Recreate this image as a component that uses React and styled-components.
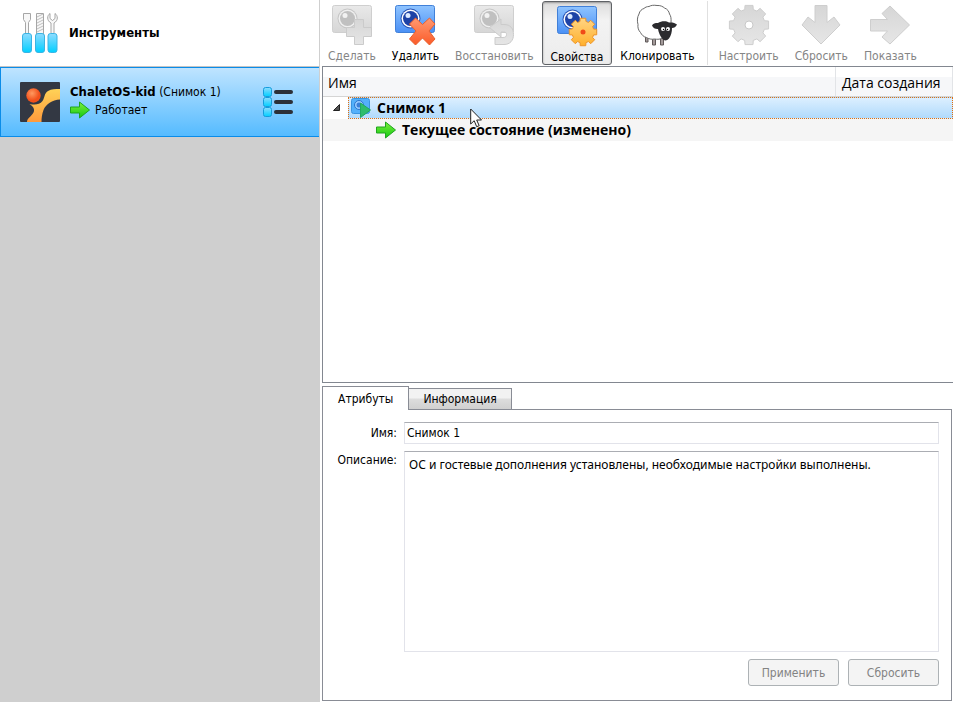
import React from "react"
import styled, { createGlobalStyle } from "styled-components"

const Defs = () => (
  <HiddenSvg width="0" height="0" aria-hidden="true">
    <defs>
      <linearGradient id="camBlue" x1="0" y1="0" x2="0" y2="1">
        <stop offset="0" stopColor="#8fc4ff" />
        <stop offset="1" stopColor="#4a90f5" />
      </linearGradient>
      <linearGradient id="camGray" x1="0" y1="0" x2="0" y2="1">
        <stop offset="0" stopColor="#e9e9e9" />
        <stop offset="1" stopColor="#d6d6d6" />
      </linearGradient>
      <linearGradient id="gray" x1="0" y1="0" x2="0" y2="1">
        <stop offset="0" stopColor="#d6d6d6" />
        <stop offset="1" stopColor="#e6e6e6" />
      </linearGradient>
      <linearGradient id="red" x1="0" y1="0" x2="0" y2="1">
        <stop offset="0" stopColor="#ff9a72" />
        <stop offset="1" stopColor="#fb5a28" />
      </linearGradient>
      <linearGradient id="gold" x1="0" y1="0" x2="0" y2="1">
        <stop offset="0" stopColor="#ffd584" />
        <stop offset="1" stopColor="#ffb02c" />
      </linearGradient>
      <linearGradient id="green" x1="0" y1="0" x2="0" y2="1">
        <stop offset="0" stopColor="#7ef03c" />
        <stop offset="1" stopColor="#12c812" />
      </linearGradient>
      <linearGradient id="cyan" x1="0" y1="0" x2="0" y2="1">
        <stop offset="0" stopColor="#8fdcff" />
        <stop offset="1" stopColor="#00cfff" />
      </linearGradient>
      <linearGradient id="amber" x1="0" y1="0" x2="0" y2="1">
        <stop offset="0" stopColor="#ffd257" />
        <stop offset="1" stopColor="#ff9a3c" />
      </linearGradient>
      <radialGradient id="ball" cx="0.4" cy="0.35">
        <stop offset="0" stopColor="#ff9a60" />
        <stop offset="1" stopColor="#f2501a" />
      </radialGradient>
    </defs>
  </HiddenSvg>
)

const gearPath = (c, outer, inner) => {
  const points = []
  for (let i = 0; i < 8; i++) {
    const a = (i * Math.PI) / 4
    ;[
      [inner, -0.27],
      [outer, -0.2],
      [outer, 0.2],
      [inner, 0.27],
    ].forEach(([r, d]) =>
      points.push(
        `${(c + r * Math.cos(a + d)).toFixed(2)} ${(c + r * Math.sin(a + d)).toFixed(2)}`
      )
    )
  }
  return `M${points.join("L")}Z`
}

const Camera = ({ gray }) => (
  <g>
    <rect
      x="0.5"
      y="0.5"
      width="39"
      height="27"
      rx="2"
      fill={gray ? "url(#camGray)" : "url(#camBlue)"}
      stroke={gray ? "#cfcfcf" : "#4180d8"}
    />
    <circle cx="15.5" cy="13.5" r="10" fill={gray ? "#c6c6c6" : "#2a55b5"} />
    <circle cx="15.5" cy="13.5" r="9" fill={gray ? "#efefef" : "#fff"} />
    <circle cx="15.5" cy="13.5" r="7.5" fill={gray ? "#c0c0c0" : "#1d42a6"} />
    <circle cx="13" cy="10.5" r="2.5" fill={gray ? "#f2f2f2" : "#dceaff"} />
  </g>
)

const TakeIcon = () => (
  <svg viewBox="0 0 40 40">
    <Camera gray />
    <path
      d="M22.5 14.5h9v8h8v9h-8v8h-9v-8h-8v-9h8z"
      fill="url(#gray)"
      stroke="#cbcbcb"
    />
  </svg>
)
const DeleteIcon = () => (
  <svg viewBox="0 0 40 40">
    <Camera />
    <path
      d="M20.5 13l7 6.5 7-6.500 5.500 6-6 7 6 8-5.500 6-7-7-7 7-6-6 6.500-8-6.500-7z"
      fill="url(#red)"
      stroke="#e8602e"
      strokeLinejoin="round"
    />
  </svg>
)
const RestoreIcon = () => (
  <svg viewBox="0 0 40 40">
    <Camera gray />
    <path
      d="M15.5 22.5L27 14v5.500h3c6.500 0 9.500 4 9.500 10s-3.500 10-9.500 10h-9v-7h8c2.500 0 3.500-1 3.500-3s-1-2.500-3.500-2.500h-2V32z"
      fill="url(#gray)"
      stroke="#cbcbcb"
      strokeLinejoin="round"
    />
  </svg>
)
const PropertiesIcon = () => (
  <svg viewBox="0 0 40 40">
    <Camera />
    <path
      d={gearPath(26, 14, 11)}
      fill="url(#gold)"
      stroke="#ee9428"
      strokeLinejoin="round"
    />
    <circle cx="26" cy="26" r="2.5" fill="#f04a18" />
  </svg>
)
const SheepIcon = () => (
  <svg viewBox="0 0 40 40">
    <g fill="#a39a9a" stroke="#5e5858">
      <path d="M8.500 31v6h2.500v-5M15.500 33v7h3v-7M23.500 33v7h3v-7" />
    </g>
    <path
      d="M12 1.500c2-1.300 5-1.500 8-1 3-.3 6 1 7.500 2.500 3 1 4.500 3.500 5 6 1.500 2 1.800 5 1.500 8 1 4-.5 8-2 10-.5 3-3 5-5.500 5.500-3 2-6 2-9 1.500-3 .7-6-.2-8-1.500-3-.5-5-3-6-5-2-2-3-5-2.500-8C0 16 .2 12 2 9c.5-3 3-5 5-5.500 1-1.200 3-2 5-2z"
      fill="#fff"
      stroke="#6a6a6a"
    />
    <path
      d="M15 20.500c1-2 3-2.500 6-2.500 3-2 8-2.500 11-.5 3-.3 6 .2 8 2-1 2.500-3 3.500-5 3.500 0 4-1 8-3 10.500-2 2.500-5 2.500-6.500.5-2-2.500-4-6.500-4.500-10-2.500.2-5-1-6-3.500z"
      fill="#2b2b2e"
    />
    <circle cx="26" cy="24" r="2" fill="#fff" />
    <circle cx="31" cy="24" r="2" fill="#fff" />
    <circle cx="26.500" cy="24.500" r="0.700" />
    <circle cx="30.500" cy="24.500" r="0.700" />
  </svg>
)
const SettingsIcon = () => (
  <svg viewBox="0 0 40 40">
    <path
      d={gearPath(20, 20, 16)}
      fill="url(#gray)"
      stroke="#cecece"
      strokeLinejoin="round"
    />
    <circle cx="20" cy="20" r="4" fill="#fff" stroke="#c8c8c8" />
  </svg>
)
const DiscardIcon = () => (
  <svg viewBox="0 0 40 40">
    <path
      d="M14 .5h12v17l7-5.500 6 8-19 19L1 20l6-8 7 5.500z"
      fill="url(#gray)"
      stroke="#cecece"
      strokeLinejoin="round"
    />
  </svg>
)
const ShowIcon = () => (
  <svg viewBox="0 0 40 40">
    <path
      d="M.5 14.500h17l-5.500-6 8-7.500L39.500 20 20 39l-8-7 5.500-6H.5z"
      fill="url(#gray)"
      stroke="#cecece"
      strokeLinejoin="round"
    />
  </svg>
)
const ToolsIcon = () => (
  <svg width="36" height="40" viewBox="0 0 36 40">
    <g fill="#f7f7f7" stroke="#a6a6a6">
      <path d="M1.500.5h7v6l-2 3v12h-3v-12l-2-3z" />
      <path d="M14.500.5h7v21h-7z" />
      <path
        d="M15 4l6-3M15 7l6-3M15 10l6-3M15 13l6-3M15 16l6-3M15 19l6-3"
        strokeWidth="0.700"
      />
      <path d="M28 .5v5l2.500 2L33 5.500v-5c3 2 3.500 7-1 9.500v11.500h-3V10c-4.500-2.500-4-7.500-1-9.500z" />
    </g>
    <g fill="url(#cyan)" stroke="#3ab4e4">
      <rect x="0.500" y="20.500" width="9" height="19" rx="2.500" />
      <rect x="13.500" y="20.500" width="9" height="19" rx="2.500" />
      <rect x="26" y="20.500" width="9" height="19" rx="2.500" />
    </g>
  </svg>
)
const MachineIcon = () => (
  <svg width="40" height="40" viewBox="0 0 40 40">
    <rect width="40" height="40" rx="1" fill="#333843" />
    <circle cx="13.500" cy="13.500" r="7.200" fill="url(#ball)" />
    <path
      d="M40 7v10.500C32 18 26 22 23.500 28c-1.500 4-2 8-2 12H7c0-4 4-5 6.500-9.500 1.500-3 0-6-4-8.500 5 1 10 1 13-3 2.500-3.500 1.500-7.500 5.500-10 3.500-2 7.500-2 12-2z"
      fill="url(#amber)"
    />
  </svg>
)
const GreenArrow = () => (
  <svg width="20" height="18" viewBox="0 0 20 18">
    <path
      d="M.5 6h9V1l10 8-10 8v-5h-9z"
      fill="url(#green)"
      stroke="#1fa41f"
      strokeLinejoin="round"
    />
  </svg>
)
const MenuIcon = () => (
  <svg width="31" height="30" viewBox="0 0 31 30">
    {[0, 10, 20].map((y) => (
      <g key={y}>
        <rect
          x="0.500"
          y={y + 0.5}
          width="8"
          height="9"
          rx="2"
          fill="url(#cyan)"
          stroke="#159ddc"
        />
        <rect x="11" y={y + 3} width="19" height="4" rx="2" fill="#2c3038" />
      </g>
    ))}
  </svg>
)
const SnapshotIcon = () => (
  <svg width="20" height="20" viewBox="0 0 20 20">
    <rect x="0.500" y="0.500" width="18" height="15" rx="2" fill="#54b0fa" stroke="#3a94e0" />
    <circle cx="8" cy="7" r="4.500" fill="#9accff" stroke="#2a74cc" />
    <circle cx="8" cy="7" r="2.500" fill="#3a7fd8" />
    <path d="M9.500 5l10 7-10 7.500z" fill="#2ebc6c" stroke="#22a862" />
  </svg>
)
const CursorIcon = () => (
  <svg width="13" height="20" viewBox="0 0 13 20">
    <path
      d="M.7 1v15l3.500-3.300 2.500 6 2.500-1-2.500-5.700h4.800z"
      fill="#fff"
      stroke="#222"
    />
  </svg>
)

const groups = [
  [
    { label: "Сделать", icon: <TakeIcon />, disabled: true },
    { label: "Удалить", icon: <DeleteIcon /> },
    { label: "Восстановить", icon: <RestoreIcon />, disabled: true },
    { label: "Свойства", icon: <PropertiesIcon />, active: true },
    { label: "Клонировать", icon: <SheepIcon /> },
  ],
  [
    { label: "Настроить", icon: <SettingsIcon />, disabled: true },
    { label: "Сбросить", icon: <DiscardIcon />, disabled: true },
    { label: "Показать", icon: <ShowIcon />, disabled: true },
  ],
]

const App = () => (
  <>
    <GlobalStyle />
    <Defs />
    <Page>
      <Sidebar>
        <ToolsItem>
          <ToolsIcon />
          <Name>Инструменты</Name>
        </ToolsItem>
        <Machine>
          <MachineIcon />
          <MachineText>
            <div>
              <Name>ChaletOS-kid</Name> (Снимок 1)
            </div>
            <State>
              <GreenArrow />
              Работает
            </State>
          </MachineText>
          <MenuButton type="button" aria-label="Меню">
            <MenuIcon />
          </MenuButton>
        </Machine>
      </Sidebar>

      <Main>
        <Toolbar>
          {groups.map((group, i) => (
            <ToolGroup key={i}>
              {group.map(({ label, icon, disabled, active }) => (
                <Tool key={label} type="button" disabled={disabled} $active={active}>
                  {icon}
                  {label}
                </Tool>
              ))}
            </ToolGroup>
          ))}
        </Toolbar>

        <TreePane>
          <Tree>
            <thead>
              <tr>
                <Th>Имя</Th>
                <Th $date>Дата создания</Th>
              </tr>
            </thead>
            <tbody>
              <tr>
                <Td colSpan={2}>
                  <TreeRow>
                    <Expander type="button" aria-label="Свернуть">
                      <svg width="9" height="9" viewBox="0 0 9 9">
                        <path d="M7.500 1.500v6h-6z" fill="#555" stroke="#222" />
                      </svg>
                    </Expander>
                    <Selected>
                      <SnapshotIcon />
                      Снимок 1
                      <Cursor>
                        <CursorIcon />
                      </Cursor>
                    </Selected>
                  </TreeRow>
                </Td>
              </tr>
              <tr>
                <Td colSpan={2}>
                  <TreeRow $child>
                    <GreenArrow />
                    Текущее состояние (изменено)
                  </TreeRow>
                </Td>
              </tr>
            </tbody>
          </Tree>
        </TreePane>

        <Details>
          <Tabs role="tablist">
            <Tab type="button" role="tab" aria-selected="true" $active>
              Атрибуты
            </Tab>
            <Tab type="button" role="tab" aria-selected="false">
              Информация
            </Tab>
          </Tabs>
          <Panel role="tabpanel">
            <Label htmlFor="name">Имя:</Label>
            <Input id="name" defaultValue="Снимок 1" />
            <Label htmlFor="description" $multiline>
              Описание:
            </Label>
            <TextArea
              id="description"
              defaultValue="ОС и гостевые дополнения установлены, необходимые настройки выполнены."
            />
            <Actions>
              <Button type="button" disabled>
                Применить
              </Button>
              <Button type="button" disabled>
                Сбросить
              </Button>
            </Actions>
          </Panel>
        </Details>
      </Main>
    </Page>
  </>
)

export default App

const GlobalStyle = createGlobalStyle`
  * {
    box-sizing: border-box;
  }
  body {
    margin: 0;
    background: white;
    color: black;
    font: 12px/18px Tahoma, "DejaVu Sans Condensed", "DejaVu Sans", sans-serif;
  }
  button, input, textarea {
    font: inherit;
    color: inherit;
  }
  svg {
    display: block;
    flex-shrink: 0;
  }
`
const HiddenSvg = styled.svg`
  position: absolute;
`
const Page = styled.div`
  display: flex;
  min-height: 100vh;
`
const Sidebar = styled.aside`
  flex: 0 0 320px;
  background: #cfcfcf;
`
const Name = styled.strong`
  font-size: 13px;
`
const ToolsItem = styled.div`
  display: flex;
  align-items: center;
  gap: 11px;
  height: 67px;
  padding-left: 22px;
  background: white;
  border-bottom: 1px solid #c4c4c4;
  border-right: 1px solid #cfcfcf;
`
const Machine = styled.div`
  display: flex;
  align-items: center;
  gap: 10px;
  height: 70px;
  margin-right: 1px;
  padding: 0 25px 0 19px;
  border: 1px solid #0a8ce8;
  border-right: 0;
  background: linear-gradient(#bfe4ff, #55bbff);
`
const MachineText = styled.div`
  flex: 1;
  padding-bottom: 2px;
  white-space: nowrap;
`
const State = styled.div`
  display: flex;
  align-items: center;
  gap: 5px;
`
const MenuButton = styled.button`
  padding: 0;
  border: 0;
  background: none;
`
const Main = styled.main`
  flex: 1;
  min-width: 0;
  display: flex;
  flex-direction: column;
  padding-bottom: 1px;
`
const Toolbar = styled.div`
  display: flex;
  height: 66px;
  padding: 1px 0;
`
const ToolGroup = styled.div`
  display: flex;

  & + & {
    margin-left: 4px;
    padding-left: 3px;
    border-left: 1px solid #e0e0e0;
  }
`
const Tool = styled.button`
  display: flex;
  flex-direction: column;
  align-items: center;
  padding: ${(props) => (props.$active ? "4px 8px 0" : "3px 7px 0")};
  border: 1px solid ${(props) => (props.$active ? "#5f6266" : "transparent")};
  border-radius: 3px;
  background: ${(props) =>
    props.$active ? "linear-gradient(#dcdcdc, #f3f3f3 30%, #ececec)" : "none"};
  box-shadow: ${(props) => (props.$active ? "inset 0 1px 2px #999" : "none")};
  white-space: nowrap;

  &:disabled {
    color: #858585;
  }
  svg {
    width: 40px;
    height: 40px;
    margin-bottom: 2px;
    overflow: visible;
  }
`
const TreePane = styled.section`
  flex: 1 1 0;
  margin-left: 2px;
  border: 1px solid #828790;
  border-right: 0;
  font: 14px/20px "Open Sans", "Noto Sans", sans-serif;
`
const Tree = styled.table`
  width: 100%;
  border-collapse: collapse;
`
const Th = styled.th`
  width: ${(props) => (props.$date ? "117px" : "auto")};
  height: 29px;
  padding: ${(props) => (props.$date ? "4px 6px 0" : "4px 5px 0")};
  border-right: 1px solid #e2e4e7;
  border-bottom: 1px solid #d5d5d5;
  background: linear-gradient(white 35%, #f6f7f9 35%);
  font-weight: 400;
  text-align: left;
  white-space: nowrap;
`
const Td = styled.td`
  padding: 0;
`
const TreeRow = styled.div`
  display: flex;
  align-items: center;
  gap: ${(props) => (props.$child ? "6px" : "0")};
  height: 22px;
  padding-left: ${(props) => (props.$child ? "53px" : "0")};
  background: ${(props) => (props.$child ? "#f5f5f5" : "white")};
  font-weight: 700;
`
const Expander = styled.button`
  width: 25px;
  padding: 0 0 0 9px;
  border: 0;
  background: none;
`
const Selected = styled.div`
  position: relative;
  flex: 1;
  display: flex;
  align-items: center;
  gap: 6px;
  height: 22px;
  padding-left: 2px;
  border: 1px dotted #e07010;
  background: linear-gradient(#dcefff, #b0dafc);
`
const Cursor = styled.span`
  position: absolute;
  left: 121px;
  top: 10px;
  z-index: 1;
`
const Details = styled.section`
  flex: 1 1 0;
  display: flex;
  flex-direction: column;
  margin: 3px 1px 0 2px;
`
const Tabs = styled.div`
  display: flex;
  align-items: flex-end;
`
const Tab = styled.button`
  position: relative;
  height: ${(props) => (props.$active ? "24px" : "21px")};
  margin-bottom: ${(props) => (props.$active ? "-1px" : "0")};
  padding: ${(props) => (props.$active ? "0 15px" : "0 14px")};
  border: 1px solid #898c95;
  border-bottom: 0;
  border-left-width: ${(props) => (props.$active ? "1px" : "0")};
  background: ${(props) =>
    props.$active ? "white" : "linear-gradient(#f2f2f2 45%, #dddddd 50%, #d0d0d0)"};
`
const Panel = styled.div`
  flex: 1;
  display: grid;
  grid-template-columns: auto 1fr;
  grid-template-rows: auto 1fr auto;
  gap: 7px;
  padding: 12px 12px 14px;
  border: 1px solid #898c95;
`
const Label = styled.label`
  min-width: 62px;
  padding-top: ${(props) => (props.$multiline ? "0" : "2px")};
  text-align: right;
`
const Input = styled.input`
  width: 100%;
  height: 22px;
  padding: 0 2px;
  border: 1px solid #e2e3ea;
  border-top-color: #abadb3;
`
const TextArea = styled.textarea`
  width: 100%;
  height: 100%;
  padding: 4px;
  border: 1px solid #e2e3ea;
  border-top-color: #abadb3;
  resize: none;
  font-family: Tahoma, "Noto Sans", sans-serif;
`
const Actions = styled.div`
  grid-column: 1 / -1;
  display: flex;
  justify-content: flex-end;
  gap: 9px;
`
const Button = styled.button`
  width: 91px;
  height: 27px;
  border: 1px solid #adb2b5;
  border-radius: 3px;
  background: #f4f4f4;

  &:disabled {
    color: #838383;
  }
`
